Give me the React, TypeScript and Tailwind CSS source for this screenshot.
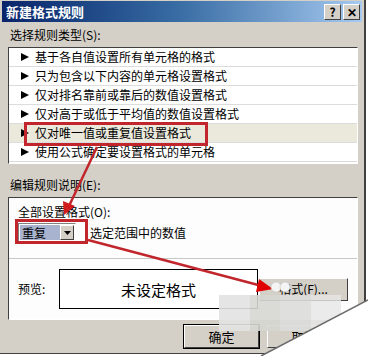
import React from 'react';

const rules = [
  '基于各自值设置所有单元格的格式',
  '只为包含以下内容的单元格设置格式',
  '仅对排名靠前或靠后的数值设置格式',
  '仅对高于或低于平均值的数值设置格式',
  '仅对唯一值或重复值设置格式',
  '使用公式确定要设置格式的单元格',
];

const font = { fontFamily: '"Noto Sans CJK SC", "Noto Sans", sans-serif' };

function TitleButton({ children }: { children: React.ReactNode }) {
  return (
    <div className="flex h-[16px] w-[17px] items-center justify-center border border-t-white border-l-white border-b-[#404040] border-r-[#404040] bg-[#d4d0c8] text-[12px] font-bold leading-none text-black">
      {children}
    </div>
  );
}

function RuleRow({ text, active }: { text: string; active: boolean }) {
  return (
    <div
      className={`flex h-[19px] items-center border-b border-[#dcdcdc] pl-[12px] text-[12px] leading-none text-black ${
        active ? 'bg-[#eae9dc]' : 'bg-white'
      }`}
    >
      <svg width="8" height="8" viewBox="0 0 8 8" className="mr-[6px]">
        <polygon points="0,0 8,4 0,8" fill="#000" />
      </svg>
      <span>{text}</span>
    </div>
  );
}

export default function App() {
  return (
    <div className="relative h-[356px] w-[368px] overflow-hidden bg-white" style={font}>
      <div className="flex h-[354px] w-[366px] flex-col border-r-2 border-b border-[#404040] bg-[#d4d0c8]">
        {/* title bar */}
        <div className="mx-[2px] mt-[1px] flex h-[21px] items-center justify-between bg-gradient-to-r from-[#0a246a] via-[#3a6ea5] to-[#a6caf0] pl-[4px] pr-[2px]">
          <span className="text-[13px] font-bold leading-none text-white">新建格式规则</span>
          <div className="flex gap-[2px]">
            <TitleButton>?</TitleButton>
            <TitleButton>✕</TitleButton>
          </div>
        </div>

        <div className="mt-[6px] pl-[10px] text-[12px] leading-[14px] text-black">选择规则类型(S):</div>

        <div className="ml-[8px] mt-[5px] h-[117px] w-[350px] border border-t-[#404040] border-l-[#404040] border-b-white border-r-white bg-white">
          {rules.map((r, i) => (
            <RuleRow key={r} text={r} active={i === 4} />
          ))}
        </div>

        <div className="mt-[14px] pl-[10px] text-[12px] leading-[14px] text-black">编辑规则说明(E):</div>

        <div className="ml-[8px] mt-[5px] flex h-[123px] w-[350px] flex-col border border-t-[#404040] border-l-[#404040] border-b-white border-r-white bg-[#fdfdfd]">
          <div className="flex h-[61px] flex-col border-b border-[#c8c8c8] pl-[9px] pt-[7px]">
            <div className="text-[12px] leading-[14px] text-black">全部设置格式(O):</div>
            <div className="mt-[4px] flex items-center">
              <div className="flex h-[19px] w-[58px] items-center border border-t-[#808080] border-l-[#808080] border-b-white border-r-white bg-white p-[1px]">
                <div className="flex h-full flex-1 items-center bg-[#a8b3d0] pl-[2px] text-[12px] leading-none text-black">重复</div>
                <div className="flex h-full w-[14px] items-center justify-center border border-t-white border-l-white border-b-[#404040] border-r-[#404040] bg-[#d4d0c8]">
                  <svg width="7" height="4" viewBox="0 0 7 4">
                    <polygon points="0,0 7,0 3.5,4" fill="#000" />
                  </svg>
                </div>
              </div>
              <span className="ml-[14px] text-[12px] leading-none text-black">选定范围中的数值</span>
            </div>
          </div>
          <div className="flex flex-1 items-center pl-[9px]">
            <span className="w-[41px] text-[12px] leading-none text-black">预览:</span>
            <div className="flex h-[40px] w-[199px] items-center justify-center border border-black bg-white text-[15px] leading-none text-black">
              未设定格式
            </div>
            <div className="ml-[1px] flex h-[23px] w-[89px] items-center justify-center border border-t-white border-l-white border-b-[#404040] border-r-[#404040] bg-[#d4d0c8] text-[12px] leading-none text-black">
              格式(F)...
            </div>
          </div>
        </div>

        <div className="mt-[5px] flex gap-[8px] pl-[184px]">
          <div className="flex h-[23px] w-[75px] items-center justify-center border border-t-white border-l-white border-b-[#404040] border-r-[#404040] bg-[#d4d0c8] text-[13px] leading-none text-black outline outline-1 outline-black">
            确定
          </div>
          <div className="flex h-[23px] w-[75px] items-center justify-center border border-t-white border-l-white border-b-[#404040] border-r-[#404040] bg-[#d4d0c8] text-[13px] leading-none text-black">
            取消
          </div>
        </div>
      </div>

      {/* red highlight boxes */}
      <div className="absolute left-[24px] top-[122px] h-[24px] w-[184px] border-[3px] border-[#c0262b]" />
      <div className="absolute left-[15px] top-[219px] h-[25px] w-[73px] border-[3px] border-[#c0262b]" />

      {/* watermark blur */}
      <div className="absolute left-[219px] top-[295px] flex h-[36px] w-[122px]">
        <div className="h-full flex-1 bg-[#e2e2e2]/90" />
        <div className="h-full flex-1 bg-[#d6d6d2]/90" />
        <div className="h-full flex-1 bg-[#dcdcda]/90" />
        <div className="h-full flex-1 bg-[#e6e6e6]/80" />
      </div>

      {/* arrows and page curl */}
      <svg className="absolute left-0 top-0" width="368" height="356" viewBox="0 0 368 356">
        <line x1="97" y1="147" x2="69" y2="206" stroke="#c0262b" strokeWidth="2.5" />
        <polygon points="64,215 63,201 75,206" fill="#d01c1c" />
        <line x1="88" y1="240" x2="262" y2="286" stroke="#c0262b" strokeWidth="2.5" />
        <polygon points="273,289 259,279 256,292" fill="#e00000" />
        <circle cx="276" cy="287" r="5" fill="#f4f4f4" stroke="#bbb" strokeWidth="0.5" />
        <circle cx="285" cy="287" r="5" fill="#f4f4f4" stroke="#bbb" strokeWidth="0.5" />
        <polygon points="368,300 368,356 261,356" fill="#ffffff" />
        <line x1="368" y1="300" x2="261" y2="356" stroke="#6a6a6a" strokeWidth="1.5" />
      </svg>
    </div>
  );
}
